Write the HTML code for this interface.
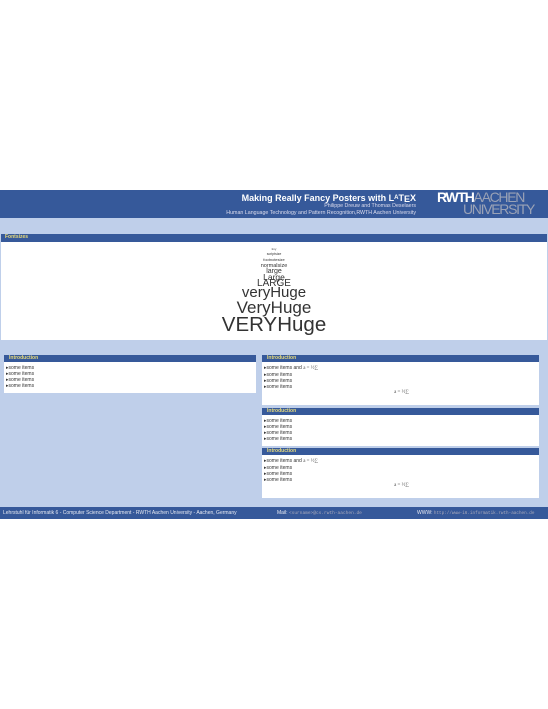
<!DOCTYPE html>
<html><head><style>
body{margin:0;width:548px;height:709px;background:#fff;font-family:"Liberation Sans",sans-serif;position:relative;overflow:hidden}
div{position:absolute;box-sizing:border-box}
.db{background:#36599a}
.hd{color:#e8db7c;font-weight:bold;font-size:5px;line-height:7px;padding-left:5px}
.w{background:#fff}
.it{font-size:5px;line-height:6px;color:#333;padding-left:2px}
.it p{margin:0}
.m{font-family:"Liberation Serif",serif;font-size:5px;color:#555}
.fs{left:0;width:548px;text-align:center;color:#333;white-space:nowrap}
</style></head><body>
<div class="db" style="left:0;top:190px;width:548px;height:28px"></div>
<div style="left:200px;top:193px;width:216px;text-align:right;color:#fff;font-weight:bold;font-size:9px;white-space:nowrap">Making Really Fancy Posters with L<span style="font-size:6px;vertical-align:2px">A</span>T<span style="vertical-align:-1px">E</span>X</div>
<div style="left:200px;top:203px;width:216px;text-align:right;color:#dde;font-size:5.3px">Philippe Dreuw and Thomas Deselaers</div>
<div style="left:150px;top:210px;width:266px;text-align:right;color:#dde;font-size:5.3px">Human Language Technology and Pattern Recognition,RWTH Aachen University</div>
<div style="left:437px;top:191px;font-weight:bold;font-size:14px;line-height:13px;letter-spacing:-1.3px;color:#fff;white-space:nowrap">RWTH<span style="color:#9aa2b6;font-weight:normal">AACHEN</span></div>
<div style="left:463px;top:203px;font-size:14px;line-height:13px;letter-spacing:-1.3px;color:#9aa2b6">UNIVERSITY</div>
<div style="left:0;top:218px;width:548px;height:289px;background:#bfcfea"></div>
<div class="db hd" style="left:1px;top:234px;width:546px;height:8px;padding-left:4px">Fontsizes</div>
<div class="w" style="left:1px;top:242px;width:546px;height:98px"></div>
<div class="fs" style="top:247.5px;font-size:3px;line-height:3px">tiny</div>
<div class="fs" style="top:252px;font-size:3.5px;line-height:4px">scriptsize</div>
<div class="fs" style="top:258px;font-size:4px;line-height:4px">footnotesize</div>
<div class="fs" style="top:263px;font-size:5.5px;line-height:6px">normalsize</div>
<div class="fs" style="top:267.5px;font-size:7px;line-height:7px">large</div>
<div class="fs" style="top:273px;font-size:8.5px;line-height:8px">Large</div>
<div class="fs" style="top:279px;font-size:10px;line-height:10px">LARGE</div>
<div class="fs" style="top:285px;font-size:15px;line-height:16px">veryHuge</div>
<div class="fs" style="top:299px;font-size:17px;line-height:18px">VeryHuge</div>
<div class="fs" style="top:314px;font-size:20.5px;line-height:22px">VERYHuge</div>
<div class="db hd" style="left:4px;top:355px;width:252px;height:7px">Introduction</div>
<div class="w it" style="left:4px;top:362px;width:252px;height:31px;padding-top:3px"><p>▸some items</p><p>▸some items</p><p>▸some items</p><p>▸some items</p></div>
<div class="db hd" style="left:262px;top:355px;width:277px;height:7px">Introduction</div>
<div class="w it" style="left:262px;top:362px;width:277px;height:43px;padding-top:3px"><p>▸some items and <span class="m">a = ½∑</span></p><p>▸some items</p><p>▸some items</p><p>▸some items</p><p style="text-align:center" class="m">a = ½∑</p></div>
<div class="db hd" style="left:262px;top:408px;width:277px;height:7px">Introduction</div>
<div class="w it" style="left:262px;top:415px;width:277px;height:31px;padding-top:3px"><p>▸some items</p><p>▸some items</p><p>▸some items</p><p>▸some items</p></div>
<div class="db hd" style="left:262px;top:448px;width:277px;height:7px">Introduction</div>
<div class="w it" style="left:262px;top:455px;width:277px;height:43px;padding-top:3px"><p>▸some items and <span class="m">a = ½∑</span></p><p>▸some items</p><p>▸some items</p><p>▸some items</p><p style="text-align:center" class="m">a = ½∑</p></div>
<div class="db" style="left:0;top:507px;width:548px;height:12px;color:#e6e9f2;font-size:5px;line-height:12px;white-space:nowrap">
<span style="position:absolute;left:3px">Lehrstuhl für Informatik 6 - Computer Science Department - RWTH Aachen University - Aachen, Germany</span>
<span style="position:absolute;left:277px">Mail: <span style="font-family:'Liberation Mono',monospace;color:#aab;font-size:4.5px">&lt;surname&gt;@cs.rwth-aachen.de</span></span>
<span style="position:absolute;left:417px">WWW: <span style="font-family:'Liberation Mono',monospace;color:#aab;font-size:4.3px">http://www-i6.informatik.rwth-aachen.de</span></span>
</div>
</body></html>
